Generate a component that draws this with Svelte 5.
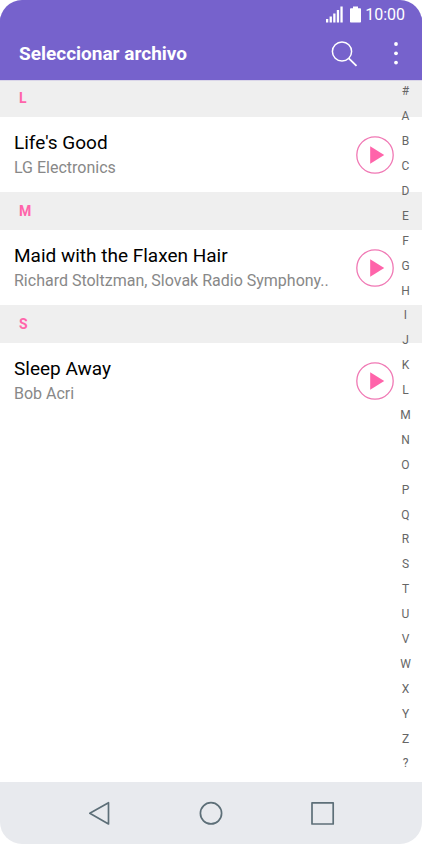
<script lang="ts">
  type Song = { title: string; artist: string };

  const sections: { letter: string; songs: Song[] }[] = [
    { letter: 'L', songs: [{ title: "Life's Good", artist: 'LG Electronics' }] },
    {
      letter: 'M',
      songs: [
        {
          title: 'Maid with the Flaxen Hair',
          artist: 'Richard Stoltzman, Slovak Radio Symphony..',
        },
      ],
    },
    { letter: 'S', songs: [{ title: 'Sleep Away', artist: 'Bob Acri' }] },
  ];

  const letters = '#ABCDEFGHIJKLMNOPQRSTUVWXYZ?'.split('');

  let playing = $state('');

  function toggle(title: string) {
    playing = playing === title ? '' : title;
  }

  function jumpTo(letter: string) {
    document.getElementById(`section-${letter}`)?.scrollIntoView();
  }
</script>

<div class="phone">
  <header>
    <div class="status">
      <svg width="17" height="17" viewBox="0 0 17 17" fill="#fff" aria-hidden="true">
        <path d="M0 13h2.3v3.5H0zM3.6 10.5h2.3v6H3.6zM7.2 7.5h2.3v9H7.2zM10.8 4h2.3v12.5h-2.3zM14.4 0.5h2.3v16h-2.3z" />
      </svg>
      <svg class="battery" width="11" height="17" viewBox="0 0 11 17" fill="#fff" aria-hidden="true">
        <path d="M3 0.5h5v1.7h2.2q.8 0 .8.8V15.7q0 .8-.8.8H.8q-.8 0-.8-.8V3q0-.8.8-.8H3z" />
      </svg>
      <span>10:00</span>
    </div>
    <div class="toolbar">
      <h1>Seleccionar archivo</h1>
      <button class="search" aria-label="Buscar">
        <svg width="28" height="28" viewBox="0 0 28 28" fill="none" stroke="#fff" stroke-width="1.5">
          <circle cx="12" cy="11.5" r="9.6" />
          <path d="M18.8 18.3L26.5 25.8" stroke-width="1.8" />
        </svg>
      </button>
      <button class="more" aria-label="Más opciones">
        <svg width="4" height="24" viewBox="0 0 4 24" fill="#fff">
          <circle cx="2" cy="2" r="1.9" />
          <circle cx="2" cy="11.3" r="1.9" />
          <circle cx="2" cy="20.6" r="1.9" />
        </svg>
      </button>
    </div>
  </header>

  <main>
    {#each sections as section}
      <section id="section-{section.letter}">
        <h2>{section.letter}</h2>
        {#each section.songs as song}
          <div class="song">
            <div class="info">
              <div class="title">{song.title}</div>
              <div class="artist">{song.artist}</div>
            </div>
            <button aria-label="Reproducir {song.title}" onclick={() => toggle(song.title)}>
              <svg width="38" height="38" viewBox="0 0 38 38">
                <circle cx="19" cy="19" r="18.2" fill="none" stroke="#f078b4" stroke-width="1.3" />
                {#if playing === song.title}
                  <path d="M13 11h4v16h-4zM21 11h4v16h-4z" fill="#ff64aa" />
                {:else}
                  <path d="M14.2 10.2L28.2 19L14.2 27.8z" fill="#ff64aa" />
                {/if}
              </svg>
            </button>
          </div>
        {/each}
      </section>
    {/each}

    <nav class="index" aria-label="Índice">
      {#each letters as letter}
        <button onclick={() => jumpTo(letter)}>{letter}</button>
      {/each}
    </nav>
  </main>

  <footer>
    <button aria-label="Atrás">
      <svg width="24" height="24" viewBox="0 0 24 24">
        <path d="M21.5 1.7v21.2L2.8 12.3z" />
      </svg>
    </button>
    <button aria-label="Inicio">
      <svg width="24" height="24" viewBox="0 0 24 24">
        <circle cx="12" cy="12.3" r="10.6" />
      </svg>
    </button>
    <button aria-label="Recientes">
      <svg width="24" height="24" viewBox="0 0 24 24">
        <path d="M1 1.8h21.2v21.2H1z" />
      </svg>
    </button>
  </footer>
</div>

<style>
  :global(body) {
    background: #fff;
  }
  .phone {
    display: flex;
    flex-direction: column;
    min-height: 100vh;
    overflow: hidden;
    border-radius: 22px;
    background: #fff;
    font-family: Roboto, 'Liberation Sans', sans-serif;
  }
  button {
    display: flex;
    align-items: center;
    justify-content: center;
    padding: 0;
    border: 0;
    background: none;
    font: inherit;
    color: inherit;
    cursor: pointer;
  }
  svg {
    display: block;
  }
  header {
    position: relative;
    z-index: 1;
    background: #7662cc;
    box-shadow: 0 1px 1px #7662cc;
    color: #fff;
  }
  .status {
    display: flex;
    align-items: center;
    justify-content: flex-end;
    height: 29px;
    padding-right: 17px;
    font-size: 16px;
    line-height: 28px;
  }
  .battery {
    margin: 0 4px 0 7px;
  }
  .toolbar {
    display: flex;
    align-items: center;
    height: 50px;
    padding: 0 16px 0 19px;
  }
  h1 {
    flex: 1;
    margin: 0;
    font-size: 19px;
    font-weight: 700;
    line-height: 24px;
  }
  .more {
    width: 20px;
    margin-left: 28px;
  }
  main {
    position: relative;
    flex: 1;
  }
  h2 {
    margin: 0;
    padding-left: 19px;
    background: #efefef;
    color: #ff64aa;
    font-size: 14px;
    font-weight: 700;
    line-height: 38px;
  }
  .song {
    display: flex;
    align-items: center;
    justify-content: space-between;
    height: 75px;
    padding: 0 28px 0 14px;
  }
  .info {
    min-width: 0;
    white-space: nowrap;
  }
  .title {
    color: #000;
    font-size: 19px;
    line-height: 26px;
  }
  .artist {
    color: #888;
    font-size: 16px;
    line-height: 24px;
  }
  .index {
    position: absolute;
    top: 0;
    right: 6px;
    bottom: 6px;
    display: flex;
    flex-direction: column;
    width: 21px;
    color: #666;
    font-size: 12px;
    line-height: 16px;
  }
  .index button {
    flex: 1;
  }
  footer {
    display: flex;
    align-items: center;
    justify-content: center;
    gap: 88px;
    height: 62px;
    background: #e8eaee;
  }
  footer svg {
    fill: none;
    stroke: #5d6f78;
    stroke-width: 1.7;
    stroke-linejoin: round;
  }
</style>
